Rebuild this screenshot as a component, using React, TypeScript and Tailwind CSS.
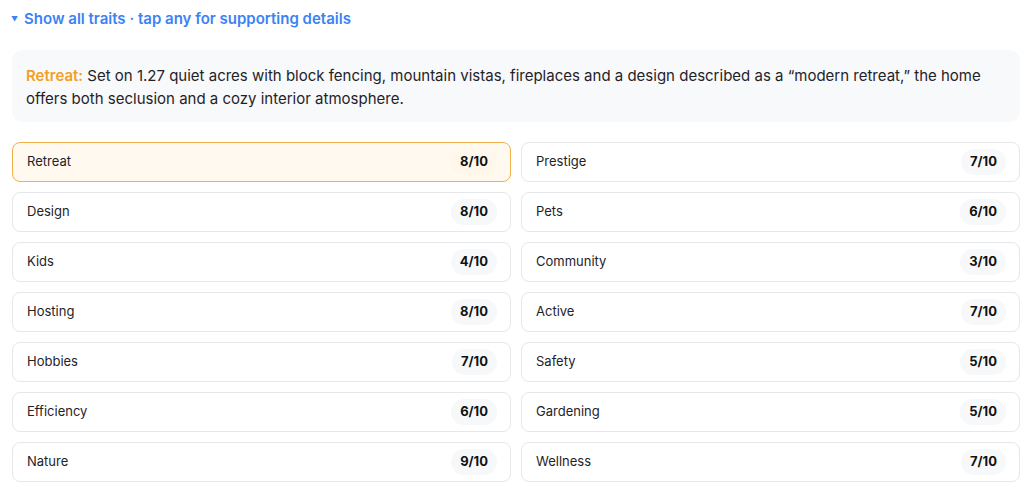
import React, { useState } from 'react';

interface Trait {
  name: string;
  score: number;
  detail: string;
}

const traits: Trait[] = [
  { name: 'Retreat', score: 8, detail: 'Set on 1.27 quiet acres with block fencing, mountain vistas, fireplaces and a design described as a \u201cmodern retreat,\u201d the home offers both seclusion and a cozy interior atmosphere.' },
  { name: 'Prestige', score: 7, detail: '' },
  { name: 'Design', score: 8, detail: '' },
  { name: 'Pets', score: 6, detail: '' },
  { name: 'Kids', score: 4, detail: '' },
  { name: 'Community', score: 3, detail: '' },
  { name: 'Hosting', score: 8, detail: '' },
  { name: 'Active', score: 7, detail: '' },
  { name: 'Hobbies', score: 7, detail: '' },
  { name: 'Safety', score: 5, detail: '' },
  { name: 'Efficiency', score: 6, detail: '' },
  { name: 'Gardening', score: 5, detail: '' },
  { name: 'Nature', score: 9, detail: '' },
  { name: 'Wellness', score: 7, detail: '' },
];

export default function App() {
  const [selected, setSelected] = useState('Retreat');
  const active = traits.find(t => t.name === selected) || traits[0];

  return (
    <div className="min-h-screen bg-white pl-3 pr-1 pt-[9px] pb-2 text-[#1f2328]" style={{ fontFamily: 'Inter, "Noto Sans", sans-serif' }}>
      {/* Toggle */}
      <div className="flex items-center gap-[6px] h-[20px] text-[#3b82f6] cursor-pointer">
        <span className="text-[7px] leading-none -ml-[1px]">▼</span>
        <span className="text-[15px] font-semibold">Show all traits · tap any for supporting details</span>
      </div>

      {/* Detail box */}
      <div className="mt-[21px] rounded-[10px] bg-[#f8f9fb] px-[14px] pt-[14px] pb-[12px] text-[15px] leading-[23px] text-[#1f2328]">
        <span className="font-semibold text-[#f0a028]">{active.name}:</span>{' '}
        {active.detail || 'No supporting details available.'}
      </div>

      {/* Trait grid */}
      <div className="mt-5 grid grid-cols-2 gap-x-[10px] gap-y-[10px]">
        {traits.map(t => {
          const isActive = t.name === selected;
          return (
            <button
              key={t.name}
              onClick={() => setSelected(t.name)}
              className={
                'flex h-10 items-center justify-between rounded-[8px] border pl-[14px] pr-[13px] text-left ' +
                (isActive ? 'border-[#f0b04a] bg-[#fff9ef]' : 'border-[#e5e7eb] bg-white')
              }
            >
              <span className="text-[13px] text-[#1f2328]">{t.name}</span>
              <span className={'rounded-full px-[9px] py-[3px] text-[13px] font-bold text-[#111] ' + (isActive ? 'bg-[#fff7ea]' : 'bg-[#f7f8fa]')}>
                {t.score}/10
              </span>
            </button>
          );
        })}
      </div>
    </div>
  );
}
